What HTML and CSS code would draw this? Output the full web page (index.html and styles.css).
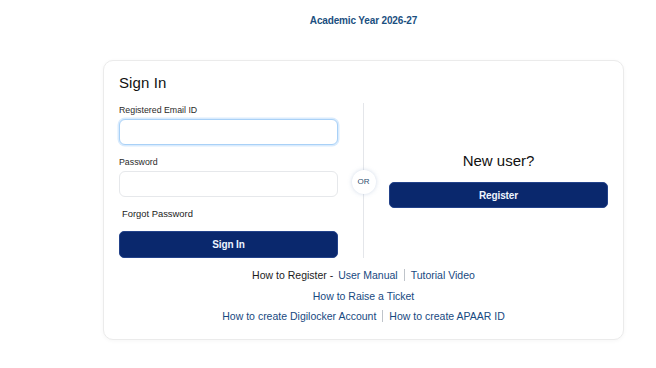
FILE: index.html
```html
<!DOCTYPE html>
<html lang="en">
<head>
<meta charset="utf-8">
<title>Sign In</title>
<link rel="stylesheet" href="styles.css">
</head>
<body>
<div class="page">
  <div class="year">Academic Year 2026-27</div>
  <div class="card">
    <h1 class="title">Sign In</h1>
    <div class="cols">
      <div class="left">
        <label class="label">Registered Email ID</label>
        <div class="input focus"></div>
        <label class="label pw">Password</label>
        <div class="input"></div>
        <div class="forgot">Forgot Password</div>
        <button class="btn">Sign In</button>
      </div>
      <div class="divider"><span class="or">OR</span></div>
      <div class="right">
        <div class="newuser">New user?</div>
        <button class="btn reg">Register</button>
      </div>
    </div>
    <div class="links">
      <div class="line"><span class="plain">How to Register -</span> <a class="lk first">User Manual</a><span class="sep"></span><a class="lk">Tutorial Video</a></div>
      <div class="line"><a class="lk">How to Raise a Ticket</a></div>
      <div class="line"><a class="lk">How to create Digilocker Account</a><span class="sep"></span><a class="lk">How to create APAAR ID</a></div>
    </div>
  </div>
</div>
</body>
</html>
```
FILE: styles.css
```css
* { box-sizing: border-box; }
html, body { margin: 0; padding: 0; background: #ffffff; }
body {
  font-family: "Liberation Sans", Arial, sans-serif;
  color: #111;
  width: 656px;
  height: 368px;
  overflow: hidden;
}
.page {
  width: 521px;
  margin-left: 103px;
  padding-top: 14px;
}
.year {
  text-align: center;
  font-size: 10px;
  line-height: 14px;
  font-weight: 700;
  color: #1b4f80;
  letter-spacing: -0.15px;
}
.card {
  margin-top: 32px;
  height: 280px;
  border: 1px solid #ebebeb;
  border-radius: 10px;
  background: #fff;
  box-shadow: 0 1px 4px rgba(0,0,0,0.04);
  padding: 11px 15px 0 15px;
}
.title {
  margin: 0;
  font-size: 15px;
  font-weight: 400;
  line-height: 22px;
  color: #111;
  letter-spacing: 0.1px;
}
.cols {
  margin-top: 9px;
  display: flex;
  align-items: stretch;
}
.left {
  width: 219px;
  display: flex;
  flex-direction: column;
  padding-top: 1px;
}
.label {
  font-size: 8.8px;
  line-height: 12px;
  color: #2a2a2a;
  margin-bottom: 3px;
}
.label.pw { margin-top: 11px; }
.input {
  height: 26px;
  border: 1px solid #e6e8eb;
  border-radius: 6px;
  background: #fff;
}
.input.focus {
  border: 1.5px solid #a9d1f7;
  box-shadow: 0 0 0 1.5px rgba(170, 210, 250, 0.45);
}
.forgot {
  margin-top: 11px;
  padding-left: 3px;
  font-size: 9.4px;
  line-height: 12px;
  color: #1a1a1a;
}
.btn {
  margin-top: 11px;
  height: 27px;
  width: 100%;
  border: 1px solid #23428a;
  border-radius: 5px;
  background: #0a286d;
  color: #eef5ff;
  font-family: "Liberation Sans", Arial, sans-serif;
  font-weight: 700;
  font-size: 10px;
  letter-spacing: -0.1px;
  padding: 0;
}
.divider {
  width: 1px;
  margin: 0 25px;
  background: #e4e6ea;
  display: flex;
  align-items: center;
  justify-content: center;
}
.or {
  flex: none;
  width: 24px;
  height: 24px;
  border-radius: 50%;
  background: #fff;
  box-shadow: 0 0 4px rgba(120,150,190,0.35);
  display: flex;
  align-items: center;
  justify-content: center;
  font-size: 8px;
  color: #2f4f70;
  margin-top: 2px;
}
.right {
  width: 219px;
  display: flex;
  flex-direction: column;
  justify-content: center;
  padding-bottom: 2px;
}
.newuser {
  text-align: center;
  font-size: 15px;
  line-height: 20px;
  color: #111;
}
.btn.reg { height: 26px; margin-top: 11px; }
.links {
  margin-top: 7px;
  text-align: center;
  font-size: 10.5px;
  line-height: 20.5px;
}
.plain { color: #1c1c1c; }
.lk { color: #17497f; text-decoration: none; }
.lk.first { margin-left: 2px; }
.sep {
  display: inline-block;
  width: 1px;
  height: 12px;
  background: #bfc4ca;
  margin: 0 6px;
  vertical-align: -2px;
}
```
